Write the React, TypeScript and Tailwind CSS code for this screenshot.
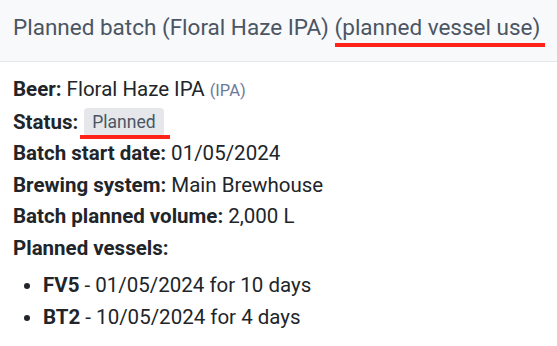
export default function App() {
  return (
    <div className="w-[557px] h-[346px] bg-white font-['Roboto',sans-serif] overflow-hidden">
      <div className="h-[62px] bg-[#f8f9fb] border-b border-[#e5e7eb] px-[13px] pt-[13px]">
        <h2 className="text-[22.5px] leading-[28px] text-[#4b5563] whitespace-nowrap">
          Planned batch (Floral Haze IPA){" "}
          <span className="relative inline-block">
            (planned vessel use)
            <span className="absolute left-0 -right-[5px] top-[30px] h-[4px] bg-[#ff2318]" />
          </span>
        </h2>
      </div>
      <div className="px-[13px] pt-[12px] text-[20.5px] leading-[31.5px] text-[#212529]">
        <div>
          <b className="font-bold">Beer:</b> Floral Haze IPA{" "}
          <span className="text-[16.5px] text-[#6b7a99]">(IPA)</span>
        </div>
        <div className="flex items-center">
          <b className="font-bold">Status:</b>
          <span className="relative ml-[6px] inline-block rounded-[4px] bg-[#e5e7eb] px-[8px] text-[17.5px] leading-[28px] text-[#4b5563]">
            Planned
            <span className="absolute -left-[4px] -right-[6px] top-[27px] h-[4px] bg-[#ff2318]" />
          </span>
        </div>
        <div>
          <b className="font-bold">Batch start date:</b> 01/05/2024
        </div>
        <div>
          <b className="font-bold">Brewing system:</b> Main Brewhouse
        </div>
        <div>
          <b className="font-bold">Batch planned volume:</b> 2,000 L
        </div>
        <div>
          <b className="font-bold">Planned vessels:</b>
        </div>
        <ul className="list-disc pl-[30px] mt-[6px]">
          <li>
            <b className="font-bold">FV5</b> - 01/05/2024 for 10 days
          </li>
          <li>
            <b className="font-bold">BT2</b> - 10/05/2024 for 4 days
          </li>
        </ul>
      </div>
    </div>
  );
}
